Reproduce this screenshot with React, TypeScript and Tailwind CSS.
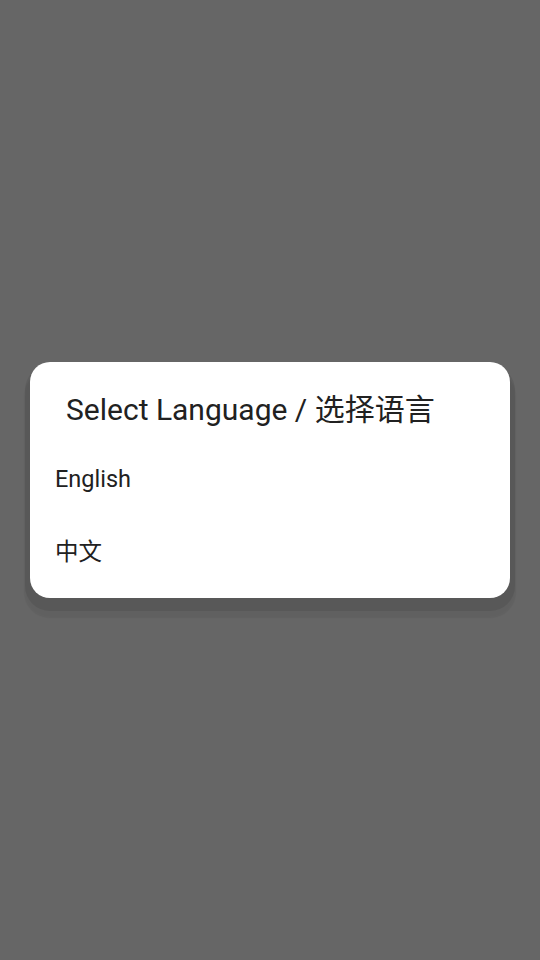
export default function App() {
  const options = ["English", "中文"];

  return (
    <div
      className="flex min-h-screen items-center justify-center bg-[#666666] px-[30px]"
      style={{ fontFamily: 'Roboto, "Noto Sans CJK SC", sans-serif' }}
    >
      <div className="w-full rounded-[20px] bg-white pt-[30px] pb-[32px] text-[#212121] shadow-[0_8px_0_5px_rgba(0,0,0,0.08),0_14px_1px_6px_rgba(0,0,0,0.05)]">
        <h2 className="pl-[36px] text-[30px] leading-[36px] font-normal">
          Select Language / 选择语言
        </h2>
        <ul className="mt-[37px] flex flex-col gap-[45px] pl-[25px]">
          {options.map((opt) => (
            <li key={opt} className="text-[23.5px] leading-[28px]">
              {opt}
            </li>
          ))}
        </ul>
      </div>
    </div>
  );
}
